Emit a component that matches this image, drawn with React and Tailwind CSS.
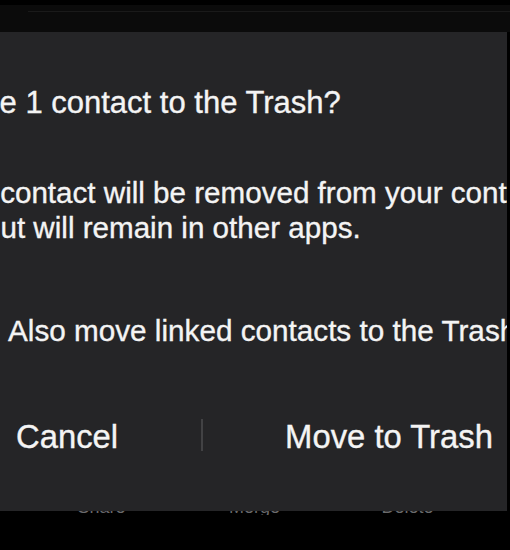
import React from 'react'

const font = { fontFamily: '"Liberation Sans", Arial, sans-serif' }

const App = () => {
    return (
        <div className='w-[510px] h-[550px] bg-black overflow-hidden flex flex-col' style={font}>
            {/* status strip above the dialog */}
            <div className='h-[5px] shrink-0 bg-black' />
            <div className='h-[27px] shrink-0 bg-[#0b0b0b] flex flex-col'>
                <div className='h-[6px]' />
                <div className='h-px ml-[28px] bg-[#1a1a1a]' />
            </div>

            {/* dialog, its left side runs off the screen */}
            <div className='-ml-[60px] w-[567px] h-[479px] shrink-0 bg-[#252527] overflow-hidden flex flex-col text-[#f4f4f4] whitespace-nowrap [-webkit-text-stroke:0.35px_#f4f4f4]'>
                <div className='pt-[53px] pl-[1px] text-[31px] leading-[36px]'>
                    Move 1 contact to the Trash?
                </div>

                <div className='mt-[54px] text-[29.6px] leading-[35px]'>
                    <div className='-ml-[4px]'>This contact will be removed from your contacts</div>
                    <div className='ml-[44px]'>but will remain in other apps.</div>
                </div>

                <label className='mt-[68px] flex items-center text-[29.7px] leading-[36px]'>
                    <span className='w-[26px] h-[26px] shrink-0 rounded-[4px] border-2 border-[#8a8a8c]' />
                    <span className='ml-[42px] shrink-0'>Also move linked contacts to the Trash</span>
                </label>

                <div className='mt-[68px] flex items-start text-[32.8px] leading-[40px]'>
                    <button className='ml-[76px] shrink-0'>Cancel</button>
                    <div className='ml-[83px] mt-[2px] w-[2px] h-[32px] shrink-0 bg-[#424244]' />
                    <button className='ml-[82px] shrink-0'>Move to Trash</button>
                </div>
            </div>

            {/* bottom bar labels, mostly hidden under the dialog */}
            <div className='h-[4px] shrink-0 overflow-hidden flex items-end pl-[25px] text-[18px] leading-[16px] text-[#6a6a6c]'>
                <span className='w-[153px] shrink-0 text-center'>Share</span>
                <span className='w-[153px] shrink-0 text-center'>Merge</span>
                <span className='w-[153px] shrink-0 text-center'>Delete</span>
            </div>
        </div>
    )
}

export default App
